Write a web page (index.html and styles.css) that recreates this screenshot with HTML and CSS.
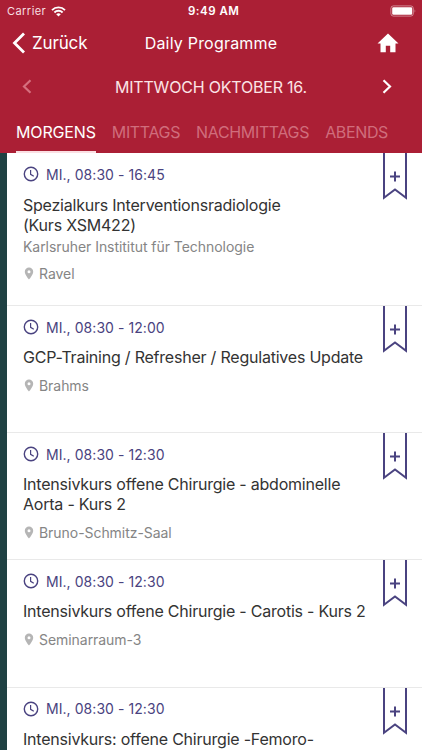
FILE: index.html
```html
<!DOCTYPE html>
<html lang="de">
<head>
    <meta charset="UTF-8">
    <title>Daily Programme</title>
    <link rel="stylesheet" href="styles.css">
</head>
<body>

<svg class="symbols">
    <symbol id="clock" viewBox="0 0 16 16">
        <circle cx="8" cy="8" r="6.7" fill="none" stroke="currentColor" stroke-width="1.4"/>
        <path d="M7.6 4v4.3l3.2 2" fill="none" stroke="currentColor" stroke-width="1.2"/>
    </symbol>
    <symbol id="pin" viewBox="0 0 10 13">
        <path fill-rule="evenodd" d="M5 .5A4.2 4.2 0 0 0 .8 4.7C.8 7.8 5 12.5 5 12.5s4.2-4.7 4.2-7.8A4.2 4.2 0 0 0 5 .5zM5 3.2a1.5 1.5 0 1 1 0 3 1.500 1.500 0 0 1 0-3z" fill="currentColor"/>
    </symbol>
    <symbol id="bookmark" viewBox="0 0 26 48">
        <path d="M2 -2V44.700L13 36.500 24 44.700V-2" fill="none" stroke="currentColor" stroke-width="2"/>
        <path d="M8 23.500h10M13 18.500v10" stroke="currentColor" stroke-width="2"/>
    </symbol>
</svg>

<header class="header">
    <div class="status">
        <span class="carrier">Carrier</span>
        <svg class="wifi" width="15" height="11" viewBox="0 0 15 11">
            <path d="M1 4.100a9.200 9.200 0 0 1 13 0M3.400 6.500a5.800 5.800 0 0 1 8.200 0" fill="none" stroke="#fff" stroke-width="1.900"/>
            <path d="M5.200 8.300a3.300 3.300 0 0 1 4.600 0L7.500 10.600z" fill="#fff"/>
        </svg>
        <span class="clock-time">9:49 AM</span>
        <svg class="battery" width="27" height="12" viewBox="0 0 27 12">
            <rect x=".9" y=".9" width="22.4" height="10.2" rx="2.5" fill="none" stroke="#fff" stroke-opacity=".45"/>
            <rect x="2.2" y="2.2" width="20" height="7.6" rx="1.3" fill="#fff"/>
            <path d="M24.6 4.2q1.5 1.8 0 3.600z" fill="#fff" fill-opacity=".5"/>
        </svg>
    </div>

    <div class="navbar">
        <a class="back">
            <svg width="14" height="22" viewBox="0 0 14 22"><path d="M12 1.5 2.5 11 12 20.5" fill="none" stroke="#fff" stroke-width="2.8"/></svg>
            <span>Zurück</span>
        </a>
        <h1 class="title">Daily Programme</h1>
        <svg class="home" width="22" height="20" viewBox="0 0 22 20"><path d="M11 .5.5 10.500H3.500V19.300H8.800V12.800H13.200V19.300H18.500V10.500H21.500z" fill="#fff"/></svg>
    </div>

    <div class="day">
        <svg class="prev" width="10" height="15" viewBox="0 0 10 15"><path d="M8.500 1.200 2 7.500 8.500 13.800" fill="none" stroke="currentColor" stroke-width="2.2"/></svg>
        <span class="date">MITTWOCH OKTOBER 16.</span>
        <svg class="next" width="10" height="15" viewBox="0 0 10 15"><path d="M1.500 1.200 8 7.500 1.500 13.800" fill="none" stroke="currentColor" stroke-width="2.2"/></svg>
    </div>

    <nav class="tabs">
        <a class="tab active">MORGENS</a>
        <a class="tab">MITTAGS</a>
        <a class="tab">NACHMITTAGS</a>
        <a class="tab">ABENDS</a>
    </nav>
</header>

<main class="list">
    <article class="item tall">
        <div class="time"><svg class="icon-clock"><use href="#clock"/></svg>MI., 08:30 - 16:45</div>
        <h2 class="name">Spezialkurs Interventionsradiologie<br>(Kurs XSM422)</h2>
        <p class="subtitle">Karlsruher Instititut für Technologie</p>
        <div class="room"><svg class="icon-pin"><use href="#pin"/></svg>Ravel</div>
        <svg class="bookmark"><use href="#bookmark"/></svg>
    </article>

    <article class="item">
        <div class="time"><svg class="icon-clock"><use href="#clock"/></svg>MI., 08:30 - 12:00</div>
        <h2 class="name">GCP-Training / Refresher / Regulatives Update</h2>
        <div class="room"><svg class="icon-pin"><use href="#pin"/></svg>Brahms</div>
        <svg class="bookmark"><use href="#bookmark"/></svg>
    </article>

    <article class="item">
        <div class="time"><svg class="icon-clock"><use href="#clock"/></svg>MI., 08:30 - 12:30</div>
        <h2 class="name">Intensivkurs offene Chirurgie - abdominelle<br>Aorta - Kurs 2</h2>
        <div class="room"><svg class="icon-pin"><use href="#pin"/></svg>Bruno-Schmitz-Saal</div>
        <svg class="bookmark"><use href="#bookmark"/></svg>
    </article>

    <article class="item">
        <div class="time"><svg class="icon-clock"><use href="#clock"/></svg>MI., 08:30 - 12:30</div>
        <h2 class="name">Intensivkurs offene Chirurgie - Carotis - Kurs 2</h2>
        <div class="room"><svg class="icon-pin"><use href="#pin"/></svg>Seminarraum-3</div>
        <svg class="bookmark"><use href="#bookmark"/></svg>
    </article>

    <article class="item last">
        <div class="time"><svg class="icon-clock"><use href="#clock"/></svg>MI., 08:30 - 12:30</div>
        <h2 class="name">Intensivkurs: offene Chirurgie -Femoro-</h2>
        <svg class="bookmark"><use href="#bookmark"/></svg>
    </article>
</main>

</body>
</html>
```
FILE: styles.css
```css
* {
    box-sizing: border-box;
}
body {
    margin: 0;
    height: 750px;
    overflow: hidden;
    display: flex;
    flex-direction: column;
    background: #1f4143;
    font-family: Inter, "Liberation Sans", sans-serif;
    white-space: nowrap;
}
svg {
    display: block;
    flex: none;
}
.symbols {
    position: absolute;
    width: 0;
    height: 0;
}
.header {
    flex: none;
    height: 153px;
    background: #ab1f35;
    color: #fff;
}
.status {
    display: flex;
    align-items: center;
    height: 22px;
    padding: 0 5px 0 7px;
    font-size: 11px;
}
.carrier {
    width: 39px;
    letter-spacing: 0.45px;
    color: #f8dfe2;
}
.wifi {
    margin-left: 5px;
}
.clock-time {
    margin-left: 122px;
    font-size: 11.5px;
    font-weight: 600;
    letter-spacing: 0.5px;
}
.battery {
    margin-left: auto;
}
.navbar {
    display: grid;
    grid-template-columns: 1fr auto 1fr;
    align-items: center;
    height: 42px;
    padding: 0 12px;
}
.back {
    display: flex;
    align-items: center;
    gap: 6px;
    font-size: 17px;
    letter-spacing: -0.15px;
}
.title {
    margin: 0;
    font-size: 16px;
    font-weight: 400;
    letter-spacing: 0.2px;
}
.home {
    justify-self: end;
    margin-right: 11px;
}
.day {
    display: flex;
    align-items: center;
    justify-content: space-between;
    height: 45px;
    padding: 0 30px 0 22px;
    font-size: 16px;
}
.prev {
    color: #d56f7e;
}
.date {
    margin-left: 8px;
    letter-spacing: -0.2px;
    color: #fbe4e6;
}
.tabs {
    display: flex;
    gap: 16px;
    height: 44px;
    padding-left: 16px;
}
.tab {
    height: 44px;
    font-size: 16px;
    line-height: 46px;
    letter-spacing: -0.35px;
    color: #d06d7c;
}
.tab.active {
    color: #fff;
    letter-spacing: -0.15px;
    border-bottom: 2px solid #fbdfe3;
}
.list {
    flex: 1;
    min-height: 0;
    overflow: hidden;
    margin-left: 7px;
    background: #fff;
}
.item {
    position: relative;
    height: 127.2px;
    padding: 12px 16px 0;
    border-top: 1px solid #e9e9e9;
}
.item.tall {
    height: 152px;
    border-top: none;
}
.item.last {
    height: 64px;
}
.time {
    display: flex;
    align-items: center;
    gap: 7px;
    height: 18px;
    font-size: 14px;
    letter-spacing: 0.06px;
    color: #4a4380;
}
.icon-clock {
    width: 16px;
    height: 16px;
}
.name {
    margin: 12px 0 0;
    font-size: 16px;
    font-weight: 400;
    line-height: 19.5px;
    letter-spacing: -0.22px;
    color: #333;
}
.tall .name {
    margin-top: 13px;
}
.subtitle {
    margin: 3px 0 -1px;
    font-size: 14px;
    line-height: 18px;
    letter-spacing: -0.05px;
    color: #858585;
}
.room {
    display: flex;
    align-items: center;
    gap: 5px;
    height: 18px;
    margin-top: 9px;
    padding-left: 1px;
    font-size: 14px;
    letter-spacing: -0.05px;
    color: #858585;
}
.icon-pin {
    width: 10px;
    height: 13px;
    color: #b5b5b5;
}
.bookmark {
    position: absolute;
    top: 0;
    right: 14px;
    width: 26px;
    height: 48px;
    color: #4a4380;
}
```
